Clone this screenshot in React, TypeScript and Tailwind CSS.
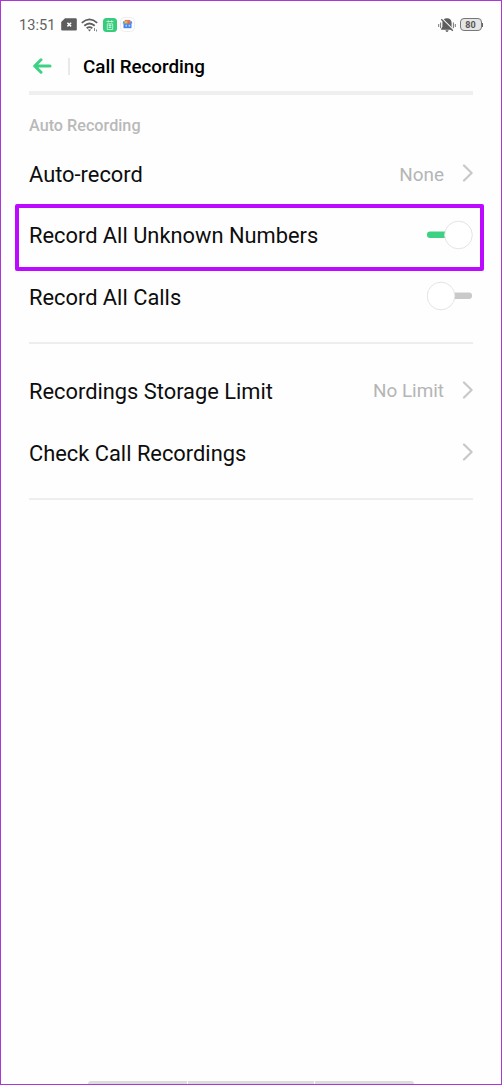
import type { ReactNode } from "react";

interface RowProps {
  label: string;
  className?: string;
  children?: ReactNode;
}

const Chevron = () => (
  <svg className="mb-[2px] ml-[18px] h-[18px] w-[11px] shrink-0" viewBox="0 0 11 18" fill="none">
    <path d="M2 1.500 9.600 9 2 16.500" stroke="#c8c8c8" strokeWidth="2.200" strokeLinecap="round" strokeLinejoin="round" />
  </svg>
);

const Toggle = ({ on }: { on: boolean }) => (
  <svg className="mb-[2px] h-[30px] w-[46px] shrink-0" viewBox="0 0 46 30" role="switch" aria-checked={on}>
    <rect x="0" y="11.5" width="45" height="6.6" rx="3" fill={on ? "#3dd184" : "#c9c9c9"} />
    <circle cx={on ? 31.5 : 14} cy="15" r="13.8" fill="#fff" stroke="#e4e4e4" strokeWidth="1" />
  </svg>
);

const Row = ({ label, className = "", children }: RowProps) => (
  <div className={`flex items-center justify-between ${className}`}>
    <span className="pt-[2px] text-[21.85px] whitespace-nowrap text-[#0d0d0d]">{label}</span>
    <div className="flex items-center">{children}</div>
  </div>
);

const Value = ({ children }: { children: ReactNode }) => (
  <span className="pt-px text-[18.9px] text-[#b5b5b5]">{children}</span>
);

const StatusBar = () => (
  <div className="-mr-[10px] -ml-[10px] flex h-12 items-center justify-between">
    <div className="flex items-center">
      <span className="w-[37px] pt-px text-[14.6px] whitespace-nowrap text-[#626262]">13:51</span>
      {/* SIM card */}
      <svg className="ml-[5px] h-[13px] w-[16px]" viewBox="0 0 16 13">
        <path d="M4 .3h10.5q1.3 0 1.3 1.3v9.6q0 1.3-1.3 1.3h-13Q.2 12.500.2 11.200V4z" fill="#5e5e5e" />
        <path d="m6.400 4.700 3.700 3.700m0-3.700L6.400 8.400" stroke="#fff" strokeWidth="1.5" />
      </svg>
      {/* Wi-Fi */}
      <svg className="ml-1 h-[14px] w-[18px]" viewBox="0 0 18 14" fill="none" stroke="#5e5e5e" strokeWidth="1.8">
        <path d="M.8 4.800Q8.500-2 16.200 4.800M3.300 7.700q5.200-4.500 10.400 0M5.700 10.300q2.800-2.300 5.600 0" />
        <path d="m6.800 11.500 1.700 2 1.700-2z" fill="#5e5e5e" stroke="none" />
        <path d="M13.500 10v3m2-1.500v2" stroke="#888" strokeWidth="1" />
      </svg>
      {/* Notification icons */}
      <svg className="ml-[4px] h-[14px] w-[14px]" viewBox="0 0 14 14">
        <rect width="14" height="14" rx="3.500" fill="#35cc7b" />
        <path d="M3.500 3.500h7M5.300 2.300v2.200m3.400-2.200v2.200M4.300 5.800h5.400v5.700H4.300zM5.500 7.500h3M5.500 9.500h3M7 6v4" fill="none" stroke="#d9f8e6" strokeWidth=".8" />
      </svg>
      <svg className="ml-[3px] h-[15px] w-[15px]" viewBox="0 0 15 15">
        <rect x=".5" y=".5" width="14" height="14" rx="4" fill="#fff" stroke="#eee" />
        <path d="M5 4.300V3.400h5v1" fill="none" stroke="#e56a4a" />
        <path d="M3.500 6h8v5.200h-8z" fill="#4585ee" />
        <path d="M3.200 4.200h8.600l.5 2.200H2.700z" fill="#5192f2" />
        <path d="M4.600 4h3v2.400H4.200z" fill="#ecb23c" />
        <path d="M7.600 4h2.600l.4 2.400h-3z" fill="#df7150" />
        <path d="M5.500 7.800h1.500v1.800H5.500zM8.600 7.800h1.600v1.800H8.600z" fill="#b9d2fa" />
      </svg>
    </div>
    <div className="flex items-center">
      {/* Muted bell */}
      <svg className="h-4 w-[18px]" viewBox="0 0 18 16">
        <path d="M9 1.300c3 0 4.600 2 4.600 4.500v4l1.300 2.200v.8H3.100V12l1.300-2.200v-4C4.400 3.300 6 1.300 9 1.300M7.400 13.200h3.200Q10.300 15 9 15t-1.600-1.800" fill="#5e5e5e" />
        <path d="M.7 7v3M2.600 5.500v5.700M15.400 5.500v5.700M17.300 7v3" stroke="#777" />
        <path d="m4 1.500 11.500 11.500" stroke="#fff" strokeWidth="1.300" />
        <path d="M3.300 2.200 14.800 13.700" stroke="#5e5e5e" strokeWidth="1.300" />
      </svg>
      <div className="mb-px ml-1 flex h-[13px] w-[22px] items-center justify-center rounded-[4px] border border-[#777] bg-[#e5e5e5] pt-px text-[9px] leading-none font-bold text-[#555]">
        80
      </div>
      <div className="h-[4px] w-[1.5px] bg-[#666]" />
    </div>
  </div>
);

const NavigationBar = () => (
  <div className="mt-auto flex justify-center gap-px">
    <div className="h-[3px] w-[99px] rounded-tl-sm bg-[#dcdcdc]" />
    <div className="h-[3px] w-[126px] bg-[#dcdcdc]" />
    <div className="h-[3px] w-[99px] rounded-tr-sm bg-[#dcdcdc]" />
  </div>
);

export default function App() {
  return (
    <div className="flex h-[1085px] w-[502px] flex-col border border-[#ab37d7] bg-[#fefefe] px-7 font-[Roboto,sans-serif]">
      <StatusBar />

      {/* Header */}
      <header className="flex h-[34px] items-center">
        <svg className="ml-[3px] h-4 w-5" viewBox="0 0 20 16" fill="none" stroke="#3dd184" strokeWidth="3" strokeLinecap="round" strokeLinejoin="round">
          <path d="M18 8H2.700M9 1.800 2.700 8 9 14.200" />
        </svg>
        <div className="ml-4 h-[17px] w-[2px] bg-[#e9e9e9]" />
        <h1 className="ml-[13px] pt-px text-[18.8px] leading-7 font-medium whitespace-nowrap text-black">Call Recording</h1>
      </header>
      <div className="mt-2 h-1 bg-[#efefef]" />

      {/* Auto recording settings */}
      <h2 className="mt-[21px] h-[19px] text-[16.2px] leading-5 font-medium text-[#b9b9b9]">Auto Recording</h2>
      <Row label="Auto-record" className="mt-[10px] h-[59px]">
        <Value>None</Value>
        <Chevron />
      </Row>
      <div className="-mr-[11px] -ml-[14px] h-[67px] rounded-[2px] border-4 border-[#bb0aff] pr-[7px] pl-[10px]">
        <Row label="Record All Unknown Numbers" className="h-[55px]">
          <Toggle on />
        </Row>
      </div>
      <Row label="Record All Calls" className="h-[52px]">
        <Toggle on={false} />
      </Row>
      <div className="mt-[19px] h-[2px] bg-[#eeeeee]" />

      {/* Storage */}
      <Row label="Recordings Storage Limit" className="mt-[17px] h-[60px]">
        <Value>No Limit</Value>
        <Chevron />
      </Row>
      <Row label="Check Call Recordings" className="h-[64px]">
        <Chevron />
      </Row>
      <div className="mt-[13px] h-[2px] bg-[#eeeeee]" />

      <NavigationBar />
    </div>
  );
}
